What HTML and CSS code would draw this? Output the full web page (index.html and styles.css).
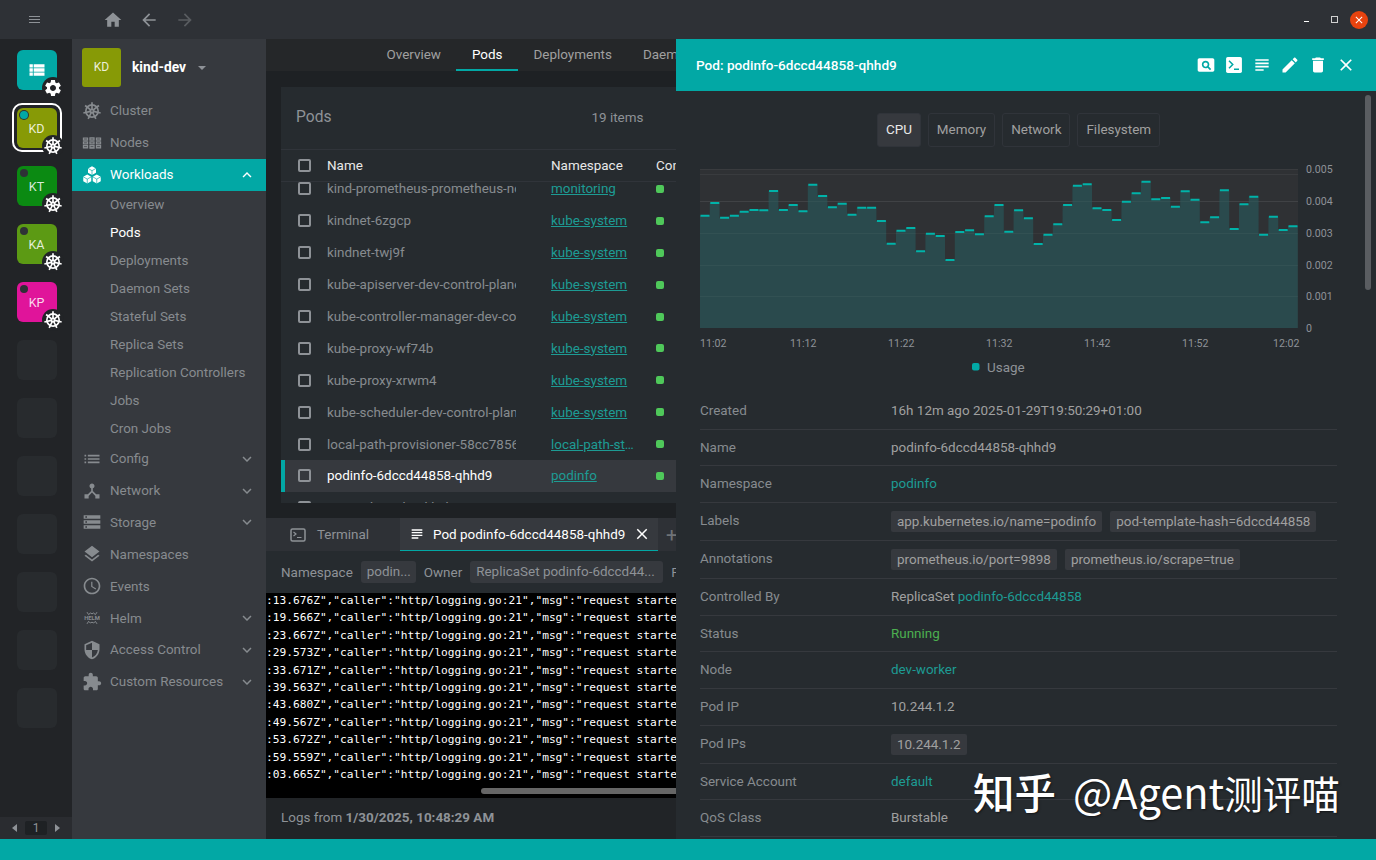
FILE: index.html
```html
<!DOCTYPE html>
<html lang="en">
<head>
    <meta charset="UTF-8">
    <meta name="viewport" content="width=device-width, initial-scale=1.0">
    <title>Lens - Pods</title>
    <link rel="stylesheet" href="styles.css">
</head>
<body>

<svg class="sprite" xmlns="http://www.w3.org/2000/svg">
    <symbol id="i-home" viewBox="0 0 24 24"><path d="M10 20v-6h4v6h5v-8h3L12 3 2 12h3v8z"/></symbol>
    <symbol id="i-back" viewBox="0 0 24 24"><path d="M20 11H7.83l5.59-5.59L12 4l-8 8 8 8 1.41-1.41L7.83 13H20v-2z"/></symbol>
    <symbol id="i-forward" viewBox="0 0 24 24"><path d="M12 4l-1.41 1.41L16.17 11H4v2h12.17l-5.58 5.59L12 20l8-8z"/></symbol>
    <symbol id="i-settings" viewBox="0 0 24 24"><path d="M19.14 12.94c.04-.3.06-.61.06-.94 0-.32-.02-.64-.07-.94l2.03-1.58c.18-.14.23-.41.12-.61l-1.92-3.32c-.12-.22-.37-.29-.59-.22l-2.39.96c-.5-.38-1.03-.7-1.62-.94l-.36-2.54c-.04-.24-.24-.41-.48-.41h-3.84c-.24 0-.43.17-.47.41l-.36 2.54c-.59.24-1.13.57-1.62.94l-2.39-.96c-.22-.08-.47 0-.59.22L2.74 8.87c-.12.21-.08.47.12.61l2.03 1.58c-.05.3-.09.63-.09.94s.02.64.07.94l-2.03 1.58c-.18.14-.23.41-.12.61l1.92 3.32c.12.22.37.29.59.22l2.39-.96c.5.38 1.03.7 1.62.94l.36 2.54c.05.24.24.41.48.41h3.84c.24 0 .44-.17.47-.41l.36-2.54c.59-.24 1.13-.56 1.62-.94l2.39.96c.22.08.47 0 .59-.22l1.92-3.32c.12-.22.07-.47-.12-.61l-2.01-1.58zM12 15.6c-1.98 0-3.6-1.62-3.6-3.6s1.62-3.6 3.6-3.6 3.6 1.62 3.6 3.6-1.62 3.6-3.6 3.6z"/></symbol>
    <symbol id="i-viewlist" viewBox="0 0 24 24"><path d="M3 14h4v-4H3v4zm0 5h4v-4H3v4zM3 9h4V5H3v4zm5 5h13v-4H8v4zm0 5h13v-4H8v4zM8 5v4h13V5H8z"/></symbol>
    <symbol id="i-wheel" viewBox="0 0 24 24">
        <g fill="none" stroke="currentColor" stroke-width="2">
            <circle cx="12" cy="12" r="7.4"/>
            <circle cx="12" cy="12" r="2"/>
            <path d="M12 10V1.4"/>
            <path d="M12 10V1.4" transform="rotate(51.4 12 12)"/>
            <path d="M12 10V1.4" transform="rotate(102.9 12 12)"/>
            <path d="M12 10V1.4" transform="rotate(154.3 12 12)"/>
            <path d="M12 10V1.4" transform="rotate(205.7 12 12)"/>
            <path d="M12 10V1.4" transform="rotate(257.1 12 12)"/>
            <path d="M12 10V1.4" transform="rotate(308.6 12 12)"/>
        </g>
    </symbol>
    <symbol id="i-nodes" viewBox="0 0 24 24"><path d="M1 5.500h6.400v3.900H1zM1 10h6.400v3.900H1zM1 14.500h6.400v4H1zM8.800 5h6.400v4.400H8.800zM8.800 10h6.400v3.900H8.800zM8.800 14.500h6.400v4.500H8.800zM16.600 5.500H23v3.900h-6.400zM16.600 10H23v3.900h-6.400zM16.600 14.500H23v4h-6.400z"/><path d="M2.500 7.200h3.400M2.500 11.800h3.400M2.500 16.300h3.400M10.300 7.200h3.400M10.300 11.800h3.400M10.300 16.300h3.400M18.100 7.200h3.400M18.100 11.800h3.400M18.100 16.300h3.400" stroke="#36393e" stroke-width=".8"/></symbol>
    <symbol id="i-workloads" viewBox="0 0 24 24">
        <path d="M12 1.500l4.800 2.600v5.200L12 12 7.200 9.300V4.100zM6.300 11.500l4.800 2.700v5.400l-4.800 2.700-4.800-2.700v-5.400zM17.700 11.500l4.800 2.700v5.400l-4.800 2.700-4.800-2.700v-5.400z"/>
        <path d="M7.200 4.100L12 6.800l4.800-2.700M12 6.800V12M1.500 14.200l4.800 2.700 4.800-2.700M6.300 16.900v5.400M12.900 14.200l4.800 2.700 4.800-2.700M17.700 16.900v5.400" fill="none" stroke="#02a8a5" stroke-width=".8"/>
    </symbol>
    <symbol id="i-config" viewBox="0 0 24 24"><path d="M3 13h2v-2H3v2zm0 4h2v-2H3v2zm0-8h2V7H3v2zm4 4h14v-2H7v2zm0 4h14v-2H7v2zM7 7v2h14V7H7z"/></symbol>
    <symbol id="i-network" viewBox="0 0 24 24"><path d="M17 16l-4-4V8.820C14.160 8.400 15 7.300 15 6c0-1.660-1.340-3-3-3S9 4.340 9 6c0 1.300.84 2.400 2 2.820V12l-4 4H3v5h5v-3.050l4-4.200 4 4.200V21h5v-5h-4z"/></symbol>
    <symbol id="i-storage" viewBox="0 0 24 24"><path d="M2 20h20v-4H2v4zm2-3h2v2H4v-2zM2 4v4h20V4H2zm4 3H4V5h2v2zm-4 7h20v-4H2v4zm2-3h2v2H4v-2z"/></symbol>
    <symbol id="i-layers" viewBox="0 0 24 24"><path d="M11.990 18.540l-7.370-5.730L3 14.070l9 7 9-7-1.630-1.270-7.380 5.740zM12 16l7.360-5.730L21 9l-9-7-9 7 1.630 1.270L12 16z"/></symbol>
    <symbol id="i-clock" viewBox="0 0 24 24"><path d="M11.990 2C6.470 2 2 6.480 2 12s4.470 10 9.990 10C17.520 22 22 17.520 22 12S17.520 2 11.990 2zM12 20c-4.420 0-8-3.580-8-8s3.580-8 8-8 8 3.580 8 8-3.580 8-8 8zm.5-13H11v6l5.250 3.150.75-1.230-4.500-2.670z"/></symbol>
    <symbol id="i-shield" viewBox="0 0 24 24"><path d="M12 1L3 5v6c0 5.550 3.840 10.740 9 12 5.160-1.260 9-6.450 9-12V5l-9-4zm0 10.990h7c-.53 4.120-3.280 7.790-7 8.940V12H5V6.300l7-3.110v8.800z"/></symbol>
    <symbol id="i-extension" viewBox="0 0 24 24"><path d="M20.500 11H19V7c0-1.100-.9-2-2-2h-4V3.500C13 2.120 11.880 1 10.500 1S8 2.120 8 3.500V5H4c-1.100 0-1.990.9-1.990 2v3.800H3.500c1.490 0 2.700 1.210 2.700 2.700s-1.210 2.700-2.700 2.700H2V20c0 1.100.9 2 2 2h3.800v-1.500c0-1.490 1.210-2.700 2.700-2.700 1.490 0 2.700 1.210 2.700 2.700V22H17c1.100 0 2-.9 2-2v-4h1.500c1.380 0 2.500-1.120 2.500-2.500S21.880 11 20.500 11z"/></symbol>
    <symbol id="i-more" viewBox="0 0 24 24"><path d="M16.590 8.590L12 13.170 7.410 8.590 6 10l6 6 6-6z"/></symbol>
    <symbol id="i-less" viewBox="0 0 24 24"><path d="M12 8l-6 6 1.410 1.410L12 10.830l4.590 4.580L18 14z"/></symbol>
    <symbol id="i-subject" viewBox="0 0 24 24"><path d="M14 17H4v2h10v-2zm6-8H4v2h16V9zM4 15h16v-2H4v2zM4 5v2h16V5H4z"/></symbol>
    <symbol id="i-close" viewBox="0 0 24 24"><path d="M19 6.410L17.590 5 12 10.590 6.410 5 5 6.410 10.590 12 5 17.590 6.410 19 12 13.410 17.590 19 19 17.590 13.410 12z"/></symbol>
    <symbol id="i-edit" viewBox="0 0 24 24"><path d="M3 17.250V21h3.750L17.810 9.940l-3.750-3.750L3 17.250zM20.710 7.040c.39-.39.39-1.020 0-1.410l-2.340-2.340c-.39-.39-1.020-.39-1.410 0l-1.830 1.830 3.750 3.750 1.830-1.830z"/></symbol>
    <symbol id="i-delete" viewBox="0 0 24 24"><path d="M6 19c0 1.100.9 2 2 2h8c1.100 0 2-.9 2-2V7H6v12zM19 4h-3.500l-1-1h-5l-1 1H5v2h14V4z"/></symbol>
    <symbol id="i-pageview" viewBox="0 0 24 24"><path d="M11.500 9C10.120 9 9 10.120 9 11.500s1.120 2.500 2.500 2.500 2.500-1.120 2.500-2.500S12.880 9 11.500 9zM20 4H4c-1.100 0-2 .9-2 2v12c0 1.100.9 2 2 2h16c1.100 0 2-.9 2-2V6c0-1.100-.9-2-2-2zm-3.210 14.210l-2.910-2.910c-.69.44-1.510.7-2.390.7C9.010 16 7 13.990 7 11.500S9.010 7 11.500 7 16 9.010 16 11.500c0 .88-.26 1.690-.7 2.390l2.910 2.900-1.420 1.420z"/></symbol>
</svg>

<div class="app">

    <header class="topbar">
        <div class="topbar-menu"><span></span><span></span><span></span></div>
        <div class="topbar-nav">
            <svg class="nav-home"><use href="#i-home"/></svg>
            <svg class="nav-back"><use href="#i-back"/></svg>
            <svg class="nav-forward"><use href="#i-forward"/></svg>
        </div>
        <div class="window-btns">
            <span class="win-min"></span>
            <span class="win-max"></span>
            <span class="win-close"><svg><use href="#i-close"/></svg></span>
        </div>
    </header>

    <div class="workspace">

        <!-- hotbar -->
        <nav class="hotbar">
            <div class="hotbar-cells">
                <div class="cell">
                    <div class="tile tile-catalog"><svg class="tile-icon"><use href="#i-viewlist"/></svg></div>
                    <span class="badge"><svg><use href="#i-settings"/></svg></span>
                </div>
                <div class="cell cell-active">
                    <div class="tile tile-kd"><i class="dot dot-on"></i>KD</div>
                    <span class="badge"><svg><use href="#i-wheel"/></svg></span>
                </div>
                <div class="cell">
                    <div class="tile tile-kt"><i class="dot"></i>KT</div>
                    <span class="badge"><svg><use href="#i-wheel"/></svg></span>
                </div>
                <div class="cell">
                    <div class="tile tile-ka"><i class="dot"></i>KA</div>
                    <span class="badge"><svg><use href="#i-wheel"/></svg></span>
                </div>
                <div class="cell">
                    <div class="tile tile-kp"><i class="dot"></i>KP</div>
                    <span class="badge"><svg><use href="#i-wheel"/></svg></span>
                </div>
                <div class="cell"><div class="tile tile-empty"></div></div>
                <div class="cell"><div class="tile tile-empty"></div></div>
                <div class="cell"><div class="tile tile-empty"></div></div>
                <div class="cell"><div class="tile tile-empty"></div></div>
                <div class="cell"><div class="tile tile-empty"></div></div>
                <div class="cell"><div class="tile tile-empty"></div></div>
                <div class="cell"><div class="tile tile-empty"></div></div>
            </div>
            <div class="hotbar-pager">
                <i class="arrow-left"></i>
                <span class="page-num">1</span>
                <i class="arrow-right"></i>
            </div>
        </nav>

        <!-- sidebar -->
        <aside class="sidebar">
            <div class="cluster-head">
                <div class="cluster-avatar">KD</div>
                <span class="cluster-name">kind-dev</span>
                <i class="caret"></i>
            </div>
            <a class="nav-item"><svg class="nav-icon"><use href="#i-wheel"/></svg>Cluster</a>
            <a class="nav-item"><svg class="nav-icon"><use href="#i-nodes"/></svg>Nodes</a>
            <a class="nav-item active"><svg class="nav-icon"><use href="#i-workloads"/></svg>Workloads<svg class="chevron"><use href="#i-less"/></svg></a>
            <div class="subnav">
                <a>Overview</a>
                <a class="current">Pods</a>
                <a>Deployments</a>
                <a>Daemon Sets</a>
                <a>Stateful Sets</a>
                <a>Replica Sets</a>
                <a>Replication Controllers</a>
                <a>Jobs</a>
                <a>Cron Jobs</a>
            </div>
            <a class="nav-item"><svg class="nav-icon"><use href="#i-config"/></svg>Config<svg class="chevron"><use href="#i-more"/></svg></a>
            <a class="nav-item"><svg class="nav-icon"><use href="#i-network"/></svg>Network<svg class="chevron"><use href="#i-more"/></svg></a>
            <a class="nav-item"><svg class="nav-icon"><use href="#i-storage"/></svg>Storage<svg class="chevron"><use href="#i-more"/></svg></a>
            <a class="nav-item"><svg class="nav-icon"><use href="#i-layers"/></svg>Namespaces</a>
            <a class="nav-item"><svg class="nav-icon"><use href="#i-clock"/></svg>Events</a>
            <a class="nav-item">
                <svg class="nav-icon" viewBox="0 0 24 24">
                    <path d="M6 5l2 3 2-2 2 1 2-1 2 2 2-3M6 19l2-3 2 2 2-1 2 1 2-2 2 3" fill="none" stroke="currentColor" stroke-width="1.200"/>
                    <text class="helm-text" x="12" y="14.500" text-anchor="middle">HELM</text>
                </svg>Helm<svg class="chevron"><use href="#i-more"/></svg>
            </a>
            <a class="nav-item"><svg class="nav-icon"><use href="#i-shield"/></svg>Access Control<svg class="chevron"><use href="#i-more"/></svg></a>
            <a class="nav-item"><svg class="nav-icon"><use href="#i-extension"/></svg>Custom Resources<svg class="chevron"><use href="#i-more"/></svg></a>
        </aside>

        <!-- main column -->
        <main class="main">
            <div class="page-tabs">
                <a>Overview</a>
                <a class="current">Pods</a>
                <a>Deployments</a>
                <a>Daemon Sets</a>
                <a>Stateful Sets</a>
            </div>
            <div class="content">
                <section class="card">
                    <div class="card-title">
                        <h2>Pods</h2>
                        <span class="card-count">19 items</span>
                    </div>
                    <div class="table-head">
                        <i class="check"></i>
                        <span class="col-name">Name</span>
                        <span class="col-ns">Namespace</span>
                        <span class="col-cond">Conditions</span>
                    </div>
                    <div class="table-body">
                        <div class="table-rows">
                            <div class="row"><i class="check"></i><span class="col-name">kind-prometheus-prometheus-node-exporter</span><a class="col-ns">monitoring</a><i class="ok"></i></div>
                            <div class="row"><i class="check"></i><span class="col-name">kindnet-6zgcp</span><a class="col-ns">kube-system</a><i class="ok"></i></div>
                            <div class="row"><i class="check"></i><span class="col-name">kindnet-twj9f</span><a class="col-ns">kube-system</a><i class="ok"></i></div>
                            <div class="row"><i class="check"></i><span class="col-name">kube-apiserver-dev-control-plane</span><a class="col-ns">kube-system</a><i class="ok"></i></div>
                            <div class="row"><i class="check"></i><span class="col-name">kube-controller-manager-dev-control-plane</span><a class="col-ns">kube-system</a><i class="ok"></i></div>
                            <div class="row"><i class="check"></i><span class="col-name">kube-proxy-wf74b</span><a class="col-ns">kube-system</a><i class="ok"></i></div>
                            <div class="row"><i class="check"></i><span class="col-name">kube-proxy-xrwm4</span><a class="col-ns">kube-system</a><i class="ok"></i></div>
                            <div class="row"><i class="check"></i><span class="col-name">kube-scheduler-dev-control-plane</span><a class="col-ns">kube-system</a><i class="ok"></i></div>
                            <div class="row"><i class="check"></i><span class="col-name">local-path-provisioner-58cc7856b6-x2xlp</span><a class="col-ns">local-path-storage</a><i class="ok"></i></div>
                            <div class="row selected"><i class="check"></i><span class="col-name">podinfo-6dccd44858-qhhd9</span><a class="col-ns">podinfo</a><i class="ok"></i></div>
                            <div class="row"><i class="check"></i><span class="col-name">prometheus-kind-kube-state-metrics</span><a class="col-ns">monitoring</a><i class="ok"></i></div>
                        </div>
                    </div>
                </section>
            </div>

            <section class="dock">
                <div class="dock-tabs">
                    <div class="dock-tab">
                        <svg class="term-icon" viewBox="0 0 16 14"><rect x="1" y="1" width="14" height="12" rx="1.500" fill="none" stroke="currentColor" stroke-width="1.500"/><path d="M3.500 4l2.500 2-2.500 2M7 9.500h4.500" fill="none" stroke="currentColor" stroke-width="1.200"/></svg>
                        Terminal
                    </div>
                    <div class="dock-tab dock-tab-active">
                        <svg class="subject-icon"><use href="#i-subject"/></svg>
                        Pod podinfo-6dccd44858-qhhd9
                        <svg class="tab-close"><use href="#i-close"/></svg>
                    </div>
                    <span class="dock-add">+</span>
                </div>
                <div class="dock-controls">
                    <span>Namespace</span>
                    <span class="select select-ns">podin...</span>
                    <span>Owner</span>
                    <span class="select select-owner">ReplicaSet podinfo-6dccd44...</span>
                    <span>Pod</span>
                </div>
                <div class="logs">
                    <div class="log-lines">
                        <div>:13.676Z","caller":"http/logging.go:21","msg":"request started"}</div>
                        <div>:19.566Z","caller":"http/logging.go:21","msg":"request started"}</div>
                        <div>:23.667Z","caller":"http/logging.go:21","msg":"request started"}</div>
                        <div>:29.573Z","caller":"http/logging.go:21","msg":"request started"}</div>
                        <div>:33.671Z","caller":"http/logging.go:21","msg":"request started"}</div>
                        <div>:39.563Z","caller":"http/logging.go:21","msg":"request started"}</div>
                        <div>:43.680Z","caller":"http/logging.go:21","msg":"request started"}</div>
                        <div>:49.567Z","caller":"http/logging.go:21","msg":"request started"}</div>
                        <div>:53.672Z","caller":"http/logging.go:21","msg":"request started"}</div>
                        <div>:59.559Z","caller":"http/logging.go:21","msg":"request started"}</div>
                        <div>:03.665Z","caller":"http/logging.go:21","msg":"request started"}</div>
                    </div>
                    <div class="log-scroll"></div>
                </div>
                <div class="dock-footer">Logs from <b>1/30/2025, 10:48:29 AM</b></div>
            </section>
        </main>

        <!-- pod details drawer, lies over the main column -->
        <section class="drawer">
            <div class="drawer-head">
                <span class="drawer-title">Pod: podinfo-6dccd44858-qhhd9</span>
                <div class="drawer-actions">
                    <svg><use href="#i-pageview"/></svg>
                    <svg viewBox="0 0 24 24"><rect x="2.500" y="2.500" width="19" height="19" rx="2" fill="#fff"/><path d="M6 7l4.500 4.500L6 16M12 17h6" fill="none" stroke="#02a8a5" stroke-width="1.800"/></svg>
                    <svg><use href="#i-subject"/></svg>
                    <svg><use href="#i-edit"/></svg>
                    <svg><use href="#i-delete"/></svg>
                    <svg><use href="#i-close"/></svg>
                </div>
            </div>
            <div class="drawer-body">
                <div class="metric-tabs">
                    <span class="metric-tab current">CPU</span>
                    <span class="metric-tab">Memory</span>
                    <span class="metric-tab">Network</span>
                    <span class="metric-tab">Filesystem</span>
                </div>

                <svg class="chart" viewBox="700 160 640 218" width="640" height="218">
                    <rect x="700" y="169" width="598" height="159" fill="#2f3134"/>
                    <path stroke="rgba(255,255,255,.05)" d="M700 169.500H1298M700 174.500H1298M700 201.500H1298"/>
                    <path fill="#2a4a4d" d="M700 328V215.700h9.800V203h9.800V217.700h9.800V215.700h9.800V211.700h9.800V210h9.800V210.300h9.800V191h9.800V210h9.800V205h9.800V211.300h9.800V184.700h9.800V196h9.800V207.300h9.800V203.700h9.800V214.700h9.800V207.700h9.800V207.700h9.800V221h9.800V243.700h9.800V230.700h9.800V228h9.800V251.300h9.800V233.700h9.800V236h9.800V260h9.800V232h9.800V230.300h9.800V234.300h9.800V216.300h9.800V205h9.800V231.700h9.800V210.300h9.800V218.300h9.800V244h9.800V234.700h9.800V224.300h9.800V205h9.800V185.700h9.800V184.300h9.800V208.300h9.800V210h9.800V220h9.800V201.700h9.800V193.300h9.800V181.700h9.800V199.300h9.800V198h9.800V206.700h9.800V191.300h9.800V199.700h9.800V222.300h9.800V217.300h9.800V190.300h9.800V229h9.800V204.300h9.800V196.700h9.800V234.700h9.800V216.700h9.800V230h9.800V226.300h9.800V328z"/>
                    <path stroke="rgba(255,255,255,.04)" d="M700 201.500H1298M700 233.500H1298M700 265.500H1298M700 296.500H1298"/>
                    <path stroke="#00b3a9" stroke-width="2" fill="none" d="M700.500 215.700h9M710.300 203h9M720.100 217.700h9M729.900 215.700h9M739.700 211.700h9M749.500 210h9M759.300 210.300h9M769.100 191h9M778.900 210h9M788.700 205h9M798.500 211.300h9M808.300 184.700h9M818.100 196h9M827.900 207.300h9M837.700 203.700h9M847.500 214.700h9M857.300 207.700h9M867.100 207.700h9M876.900 221h9M886.700 243.700h9M896.500 230.700h9M906.300 228h9M916.100 251.300h9M925.900 233.700h9M935.700 236h9M945.500 260h9M955.300 232h9M965.100 230.300h9M974.900 234.300h9M984.700 216.300h9M994.500 205h9M1004.300 231.700h9M1014.100 210.300h9M1023.900 218.300h9M1033.700 244h9M1043.500 234.700h9M1053.300 224.300h9M1063.100 205h9M1072.900 185.700h9M1082.700 184.300h9M1092.500 208.300h9M1102.300 210h9M1112.100 220h9M1121.900 201.700h9M1131.700 193.300h9M1141.500 181.700h9M1151.300 199.300h9M1161.100 198h9M1170.900 206.700h9M1180.700 191.300h9M1190.500 199.700h9M1200.300 222.300h9M1210.100 217.300h9M1219.900 190.300h9M1229.700 229h9M1239.500 204.300h9M1249.300 196.700h9M1259.100 234.700h9M1268.900 216.700h9M1278.700 230h9M1288.500 226.300h9"/>
                    <g class="chart-axis">
                        <text x="1306" y="173">0.005</text>
                        <text x="1306" y="205">0.004</text>
                        <text x="1306" y="237">0.003</text>
                        <text x="1306" y="269">0.002</text>
                        <text x="1306" y="300">0.001</text>
                        <text x="1306" y="332">0</text>
                        <text x="700" y="347">11:02</text>
                        <text x="790" y="347">11:12</text>
                        <text x="888" y="347">11:22</text>
                        <text x="986" y="347">11:32</text>
                        <text x="1084" y="347">11:42</text>
                        <text x="1182" y="347">11:52</text>
                        <text x="1273" y="347">12:02</text>
                    </g>
                    <rect x="972" y="363" width="7.500" height="7.500" rx="2" fill="#02a8a5"/>
                    <text class="chart-legend" x="987" y="371.500">Usage</text>
                </svg>

                <div class="detail-rows">
                    <div class="detail"><span class="detail-key">Created</span><span>16h 12m ago 2025-01-29T19:50:29+01:00</span></div>
                    <div class="detail"><span class="detail-key">Name</span><span>podinfo-6dccd44858-qhhd9</span></div>
                    <div class="detail"><span class="detail-key">Namespace</span><a>podinfo</a></div>
                    <div class="detail"><span class="detail-key">Labels</span><div class="tags"><span class="tag">app.kubernetes.io/name=podinfo</span><span class="tag">pod-template-hash=6dccd44858</span></div></div>
                    <div class="detail"><span class="detail-key">Annotations</span><div class="tags"><span class="tag">prometheus.io/port=9898</span><span class="tag">prometheus.io/scrape=true</span></div></div>
                    <div class="detail"><span class="detail-key">Controlled By</span><span>ReplicaSet <a>podinfo-6dccd44858</a></span></div>
                    <div class="detail"><span class="detail-key">Status</span><span class="running">Running</span></div>
                    <div class="detail"><span class="detail-key">Node</span><a>dev-worker</a></div>
                    <div class="detail"><span class="detail-key">Pod IP</span><span>10.244.1.2</span></div>
                    <div class="detail"><span class="detail-key">Pod IPs</span><div class="tags"><span class="tag">10.244.1.2</span></div></div>
                    <div class="detail"><span class="detail-key">Service Account</span><a>default</a></div>
                    <div class="detail"><span class="detail-key">QoS Class</span><span>Burstable</span></div>
                </div>
            </div>
            <div class="drawer-scroll"></div>
        </section>
    </div>

    <footer class="statusbar"></footer>

    <div class="watermark"><span class="watermark-brand">知乎</span><span class="watermark-latin">@Agent</span>测评喵</div>
</div>

</body>
</html>
```

FILE: styles.css
```css
* {
    box-sizing: border-box;
}
body {
    margin: 0;
    font-family: Roboto, "Noto Sans", sans-serif;
    font-size: 13.450px;
    color: #a0a0a0;
    background-color: #1e2124;
    overflow: hidden;
}
a {
    color: inherit;
    text-decoration: none;
}
svg {
    fill: currentColor;
}
.sprite {
    display: none;
}
.app {
    position: relative;
    display: flex;
    flex-direction: column;
    width: 1376px;
    height: 860px;
    overflow: hidden;
}

/* top bar */
.topbar {
    display: flex;
    align-items: center;
    height: 39px;
    flex-shrink: 0;
    background-color: #2e3136;
}
.topbar-menu {
    display: flex;
    flex-direction: column;
    gap: 2px;
    width: 11px;
    margin-left: 29px;
}
.topbar-menu span {
    height: 1px;
    background-color: #8e9297;
}
.topbar-nav {
    display: flex;
    align-items: center;
    gap: 16px;
    margin-left: 63px;
}
.topbar-nav svg {
    width: 20px;
    height: 20px;
}
.nav-home {
    color: #8e9297;
}
.nav-back {
    color: #8e9297;
}
.nav-forward {
    color: #595c60;
}
.window-btns {
    display: flex;
    align-items: center;
    margin-left: auto;
    margin-right: 8px;
}
.win-min {
    width: 5px;
    height: 1.500px;
    margin-top: 4px;
    background-color: #fff;
}
.win-max {
    width: 7px;
    height: 7px;
    margin-left: 22px;
    border: 1px solid #d0d0d0;
}
.win-close {
    display: flex;
    align-items: center;
    justify-content: center;
    width: 18px;
    height: 18px;
    margin-left: 12px;
    border-radius: 50%;
    color: #fff;
    background-color: #e8430f;
}
.win-close svg {
    width: 12px;
    height: 12px;
}

.workspace {
    position: relative;
    display: flex;
    flex: 1;
    min-height: 0;
}

/* hotbar */
.hotbar {
    display: flex;
    flex-direction: column;
    width: 72px;
    flex-shrink: 0;
    background-color: #222427;
}
.hotbar-cells {
    display: flex;
    flex-direction: column;
    align-items: center;
    gap: 18px;
    padding-top: 11px;
}
.cell {
    position: relative;
    width: 40px;
    height: 40px;
    margin-left: 1px;
}
.cell-active::before {
    content: "";
    box-sizing: border-box;
    position: absolute;
    top: -5px;
    left: -5px;
    width: 50px;
    height: 49px;
    border: 2.500px solid #fff;
    border-radius: 10px;
}
.tile {
    position: relative;
    display: flex;
    align-items: center;
    justify-content: center;
    width: 40px;
    height: 40px;
    border-radius: 6px;
    font-size: 12.500px;
    color: rgba(255, 255, 255, .85);
}
.tile-catalog {
    background-color: #02a8a5;
}
.tile-icon {
    width: 20px;
    height: 20px;
    color: #fff;
}
.tile-kd {
    background-color: #879a06;
}
.tile-kt {
    background-color: #0b8a12;
}
.tile-ka {
    background-color: #5c9a14;
}
.tile-kp {
    background-color: #e0149a;
}
.tile-empty {
    background-color: #282b2e;
}
.dot {
    position: absolute;
    top: 3px;
    left: 3px;
    width: 8px;
    height: 8px;
    border-radius: 50%;
    background-color: #2e3136;
}
.dot-on {
    background-color: #02a8a5;
    box-shadow: 0 0 0 1px #2e3136;
}
.badge {
    position: absolute;
    right: -7px;
    bottom: -9px;
    display: flex;
    align-items: center;
    justify-content: center;
    width: 22px;
    height: 22px;
    border-radius: 50%;
    color: #fff;
    background-color: #222427;
}
.badge svg {
    width: 20px;
    height: 20px;
}
.hotbar-pager {
    display: flex;
    align-items: center;
    justify-content: center;
    gap: 8px;
    height: 22px;
    margin-top: auto;
    background-color: #2a2c30;
    color: #8e9297;
    font-size: 12px;
}
.page-num {
    width: 22px;
    height: 14px;
    line-height: 14px;
    text-align: center;
    border-radius: 2px;
    background-color: #1e2124;
}
.arrow-left {
    border: 4px solid transparent;
    border-left-width: 0;
    border-right: 5px solid #8e9297;
}
.arrow-right {
    border: 4px solid transparent;
    border-right-width: 0;
    border-left: 5px solid #8e9297;
}

/* sidebar */
.sidebar {
    width: 194px;
    flex-shrink: 0;
    background-color: #36393e;
    color: #878b8f;
}
.cluster-head {
    display: flex;
    align-items: center;
    height: 56px;
    padding-left: 10px;
}
.cluster-avatar {
    display: flex;
    align-items: center;
    justify-content: center;
    width: 39px;
    height: 39px;
    border-radius: 3px;
    font-size: 12px;
    color: rgba(255, 255, 255, .85);
    background-color: #879a06;
}
.cluster-name {
    margin-left: 11px;
    font-size: 13.800px;
    font-weight: 700;
    color: #fff;
}
.caret {
    margin-left: 12px;
    margin-top: 2px;
    border: 4px solid transparent;
    border-bottom-width: 0;
    border-top: 4px solid #8e9297;
}
.nav-item {
    display: flex;
    align-items: center;
    height: 31.900px;
    padding-left: 10px;
}
.nav-item.active {
    color: #fff;
    background-color: #02a8a5;
}
.nav-icon {
    width: 20px;
    height: 20px;
    margin-right: 8px;
}
.chevron {
    width: 18px;
    height: 18px;
    margin-left: auto;
    margin-right: 10px;
}
.helm-text {
    font-size: 7px;
    font-weight: 700;
}
.subnav a {
    display: flex;
    align-items: center;
    height: 28px;
    padding-left: 38px;
}
.subnav a.current {
    color: #fff;
}

/* main column */
.main {
    display: flex;
    flex-direction: column;
    flex: 1;
    min-width: 0;
    background-color: #1e2124;
}
.page-tabs {
    display: flex;
    height: 32px;
    flex-shrink: 0;
    padding-left: 105px;
    background-color: #252729;
    white-space: nowrap;
}
.page-tabs a {
    padding: 0 15.500px;
    line-height: 32px;
}
.page-tabs a.current {
    color: #fff;
    border-bottom: 2px solid #02a8a5;
}
.content {
    height: 447px;
    flex-shrink: 0;
    padding: 16px 15px 15px;
}
.card {
    display: flex;
    flex-direction: column;
    height: 416px;
    background-color: #262b2f;
}
.card-title {
    display: flex;
    align-items: center;
    height: 63px;
    flex-shrink: 0;
    padding: 0 0 2px 15px;
    border-bottom: 1px solid #30343a;
}
.card-title h2 {
    margin: 0;
    font-size: 15.600px;
    font-weight: 400;
    color: #8e9297;
}
.card-count {
    margin-left: 260px;
    color: #8e9297;
}
.table-head, .row {
    display: flex;
    align-items: center;
    padding-left: 17px;
    white-space: nowrap;
}
.table-head {
    height: 32px;
    flex-shrink: 0;
    color: #e8e8e8;
    border-bottom: 1px solid #30343a;
}
.check {
    flex-shrink: 0;
    width: 13px;
    height: 13px;
    margin-right: 16px;
    border: 2px solid #8e9297;
    border-radius: 2px;
}
.col-name {
    width: 189px;
    flex-shrink: 0;
    margin-right: 35px;
    overflow: hidden;
}
.col-ns {
    width: 84px;
    flex-shrink: 0;
    margin-right: 21px;
    overflow: hidden;
    text-overflow: ellipsis;
}
.table-body {
    flex: 1;
    min-height: 0;
    overflow: hidden;
}
.table-rows {
    margin-top: -9px;
}
.row {
    height: 31.900px;
    color: #878b8f;
}
.row a {
    color: #1d9b94;
    text-decoration: underline;
}
.row.selected {
    color: #fff;
    background-color: #36393e;
    box-shadow: inset 4px 0 0 #02a8a5;
}
.ok {
    width: 8px;
    height: 8px;
    border-radius: 2px;
    background-color: #4fc85a;
}

/* dock */
.dock {
    display: flex;
    flex-direction: column;
    flex: 1;
    min-height: 0;
}
.dock-tabs {
    display: flex;
    align-items: center;
    height: 33px;
    flex-shrink: 0;
    padding-left: 24px;
    background-color: #2e3136;
    white-space: nowrap;
}
.dock-tab {
    display: flex;
    align-items: center;
    width: 110px;
    height: 33px;
    color: #8e9297;
}
.term-icon {
    width: 16px;
    height: 14px;
    margin-right: 11px;
}
.dock-tab-active {
    width: 258px;
    padding-left: 9px;
    color: #fff;
    background-color: #36393e;
    border-bottom: 1px solid #02a8a5;
}
.subject-icon {
    width: 16px;
    height: 16px;
    margin-right: 8px;
}
.tab-close {
    width: 18px;
    height: 18px;
    margin-left: auto;
    margin-right: 7px;
}
.dock-add {
    margin-left: 8px;
    font-size: 20px;
    color: #6f7377;
}
.dock-controls {
    display: flex;
    align-items: center;
    height: 42px;
    flex-shrink: 0;
    padding-left: 15px;
    gap: 8px;
    background-color: #262b2f;
    color: #8e9297;
    white-space: nowrap;
}
.select {
    height: 22px;
    line-height: 22px;
    padding: 0 6px;
    border-radius: 3px;
    background-color: #36393e;
}
.select-ns {
    width: 55px;
}
.select-owner {
    width: 193px;
}
.logs {
    position: relative;
    height: 205px;
    flex-shrink: 0;
    overflow: hidden;
    background-color: #000;
}
.log-lines {
    margin-top: -1px;
    font-family: "DejaVu Sans Mono", "Liberation Mono", monospace;
    font-size: 11.200px;
    line-height: 17.400px;
    color: #fff;
}
.log-lines div {
    white-space: pre;
}
.log-scroll {
    position: absolute;
    left: 215px;
    bottom: 4px;
    width: 600px;
    height: 6px;
    border-radius: 3px;
    background-color: #666;
}
.dock-footer {
    flex: 1;
    padding-left: 15px;
    line-height: 40px;
    color: #8e9297;
    background-color: #212427;
}

/* drawer */
.drawer {
    position: absolute;
    top: 0;
    right: 0;
    bottom: 0;
    width: 700px;
    overflow: hidden;
    background-color: #262b2f;
}
.drawer-head {
    display: flex;
    align-items: center;
    justify-content: space-between;
    height: 52px;
    padding: 0 20px;
    color: #fff;
    background-color: #02a8a5;
}
.drawer-title {
    font-size: 13.600px;
    font-weight: 500;
}
.drawer-actions {
    display: flex;
    gap: 8px;
}
.drawer-actions svg {
    width: 20px;
    height: 20px;
}
.drawer-body {
    padding: 22px 39px 0 24px;
}
.drawer-scroll {
    position: absolute;
    top: 56px;
    right: 5px;
    width: 6px;
    height: 195px;
    border-radius: 3px;
    background-color: #5a5d61;
}
.metric-tabs {
    display: flex;
    justify-content: center;
    gap: 7px;
    height: 34px;
}
.metric-tab {
    padding: 0 8px;
    line-height: 32px;
    border: 1px solid #30343a;
    border-radius: 3px;
}
.metric-tab.current {
    color: #e8e8e8;
    background-color: #36393e;
}
.chart {
    display: block;
    margin-top: 13px;
    fill: none;
}
.chart-axis text {
    font-size: 10.600px;
    fill: #8e9297;
}
.chart-legend {
    font-size: 13.450px;
    fill: #8e9297;
}
.detail-rows {
    margin-top: 15px;
    line-height: 19.670px;
}
.detail {
    display: flex;
    padding: 8px 0;
    border-bottom: 1px solid #36393e;
}
.detail a {
    color: #1d9b94;
}
.detail-key {
    width: 191px;
    flex-shrink: 0;
    color: #878b8f;
}
.tags {
    display: flex;
    gap: 8px;
}
.tag {
    height: 21px;
    line-height: 21px;
    padding: 0 6px;
    border-radius: 2px;
    background-color: #36393e;
}
.running {
    color: #4caf50;
}

.statusbar {
    height: 21px;
    flex-shrink: 0;
    background-color: #02a8a5;
}
.watermark {
    position: absolute;
    left: 973px;
    top: 763px;
    font-family: "Noto Sans CJK SC", "Noto Sans", sans-serif;
    font-size: 38.500px;
    line-height: 56px;
    color: #fff;
    white-space: nowrap;
    text-shadow: 1px 1px 2px rgba(0, 0, 0, .5);
}
.watermark-brand {
    font-size: 41.500px;
    font-weight: 500;
}
.watermark-latin {
    margin-left: 17px;
    font-size: 41.500px;
}
```
